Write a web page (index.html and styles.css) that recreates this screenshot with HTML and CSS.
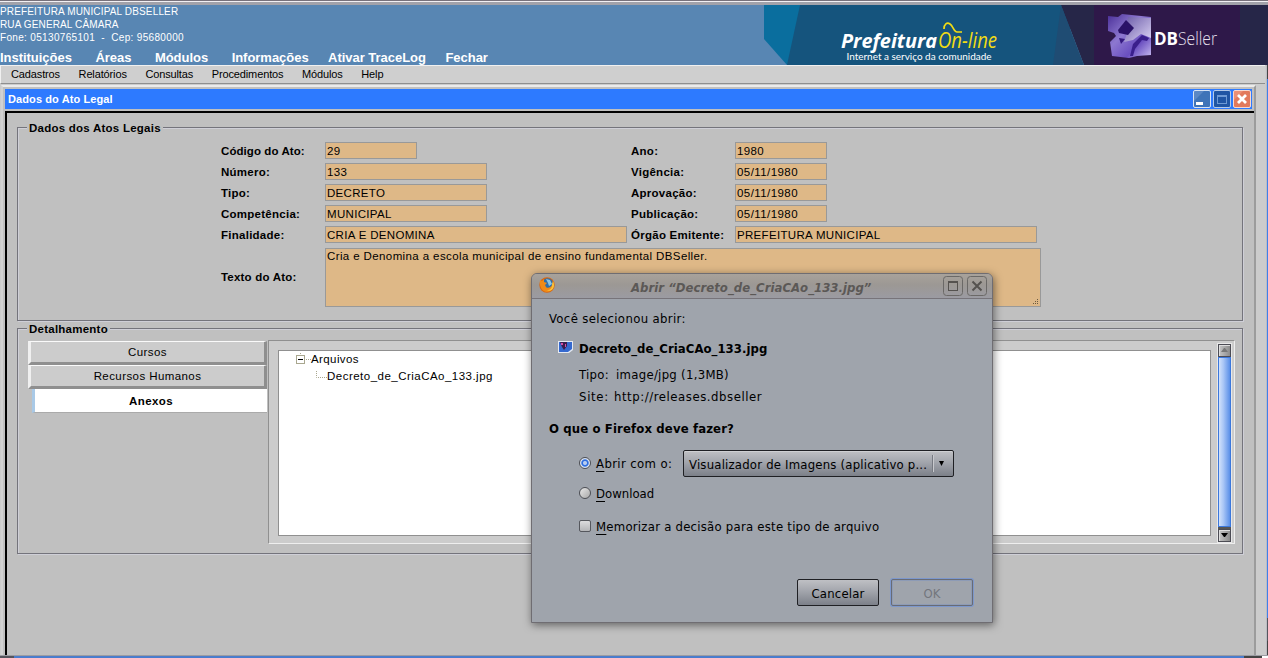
FILE: index.html
```
<!DOCTYPE html>
<html lang="pt-BR">
<head>
<meta charset="utf-8">
<title>Dados do Ato Legal</title>
<link rel="stylesheet" href="styles.css">
</head>
<body>
<div class="chrome"></div>
<header class="header">
  <div class="org">
    <div class="org-name">PREFEITURA MUNICIPAL DBSELLER</div>
    <div class="org-street">RUA GENERAL CÂMARA</div>
    <div class="org-fone">Fone: 05130765101 &nbsp;-&nbsp; Cep: 95680000</div>
    <nav class="main-nav"><a>Instituições</a><a>Áreas</a><a>Módulos</a><a>Informações</a><a class="near">Ativar TraceLog</a><a class="near">Fechar</a></nav>
  </div>
  <svg class="banner" width="504" height="60" viewBox="764 5 504 60">
    <defs>
      <linearGradient id="cube" x1="0" y1="0" x2="1" y2="1"><stop offset="0" stop-color="#4a2f98"/><stop offset=".4" stop-color="#8d78d0"/><stop offset=".7" stop-color="#6a4fc0"/><stop offset="1" stop-color="#c9bdf2"/></linearGradient>
      <linearGradient id="face" x1="0" y1="0" x2="1" y2="1"><stop offset="0" stop-color="#6a5aa8"/><stop offset="1" stop-color="#ddd5f5"/></linearGradient>
    </defs>
    <path fill="#0a6e9e" d="M764 5h40v60h-17L764 39z"/>
    <path fill="#15547d" d="M800 5h270v60H787z"/>
    <path fill="#262648" d="M1061 5h207v60h-184z"/>
    <path fill="#1f4c73" d="M1061 5l23 60h-31z"/>
    <path fill="#2e1849" d="M1094 5h146v60h-146z"/>
    <path fill="url(#cube)" d="M1108 16l10 1 4-3 29 3v38l-14 1-8 2-17-2-2-14 6-6-2-3-6-2z"/>
    <path fill="url(#face)" d="M1128 17l23 1v20l-10-4-8 6-9 2 3-9 5-6-5-5z"/>
    <path fill="#2a1268" d="M1118 30l8-10 8 8-6 7-9-2z"/>
    <path fill="#3a1f8c" d="M1130 56l3-12 9-9 7 3-2 3-5-1-7 9-2 7z"/>
    <path fill="#34197f" d="M1119 38l6 1-4 5z"/>
    <text class="pref" x="841" y="48" textLength="96" lengthAdjust="spacingAndGlyphs">Prefeitura</text>
    <text class="online" x="938" y="48" textLength="59" lengthAdjust="spacingAndGlyphs">On-line</text>
    <path fill="none" stroke="#f2dc14" stroke-width="1.700" d="M944 29c0-5 3-7 6-5s4 8 7 8h5"/>
    <text class="slogan" x="846.500" y="59.500" textLength="145" lengthAdjust="spacingAndGlyphs">Internet a serviço da comunidade</text>
    <text class="db" x="1154" y="45" textLength="24" lengthAdjust="spacingAndGlyphs">DB</text>
    <text class="seller" x="1178" y="45" textLength="39" lengthAdjust="spacingAndGlyphs">Seller</text>
  </svg>
</header>
<div class="page">
  <main class="content">
    <nav class="menubar"><a>Cadastros</a><a>Relatórios</a><a>Consultas</a><a>Procedimentos</a><a>Módulos</a><a>Help</a></nav>
    <section class="window">
      <div class="titlebar">
        <span>Dados do Ato Legal</span>
        <span class="winbtns">
          <svg width="18" height="18"><rect x=".5" y=".5" width="17" height="17" rx="1.500" fill="#3f74b8" stroke="#d8e4f4"/><path d="M1 1h10L1 11z" fill="#8fb0dc" opacity=".35"/><path fill="#fff" d="M3 12h7v3H3z"/></svg>
          <svg width="18" height="18"><rect x=".5" y=".5" width="17" height="17" rx="1.500" fill="#1f55a4" stroke="#b4cae8"/><rect x="4.500" y="5.500" width="9" height="8" fill="none" stroke="#6d9ad6"/><path fill="#6d9ad6" d="M4 5h10v2H4z"/></svg>
          <svg width="18" height="18"><rect x=".5" y=".5" width="17" height="17" rx="1.500" fill="#e2795c" stroke="#f7d9d0"/><path d="M1 1h9L1 10z" fill="#f5a58e" opacity=".5"/><path stroke="#fff" stroke-width="2.800" d="M5 5l8 8M13 5l-8 8"/></svg>
        </span>
      </div>
      <div class="winbody">
        <fieldset class="fs-dados">
          <legend>Dados dos Atos Legais</legend>
          <div class="form">
            <label class="tight">Código do Ato:</label><div class="in s">29</div><label>Ano:</label><div class="in s">1980</div>
            <label>Número:</label><div class="in m">133</div><label>Vigência:</label><div class="in s date">05/11/1980</div>
            <label>Tipo:</label><div class="in m">DECRETO</div><label>Aprovação:</label><div class="in s date">05/11/1980</div>
            <label>Competência:</label><div class="in m">MUNICIPAL</div><label>Publicação:</label><div class="in s date">05/11/1980</div>
            <label>Finalidade:</label><div class="in">CRIA E DENOMINA</div><label>Órgão Emitente:</label><div class="in">PREFEITURA MUNICIPAL</div>
            <label>Texto do Ato:</label>
            <div class="in area">Cria e Denomina a escola municipal de ensino fundamental DBSeller.<svg class="grip" width="6" height="6"><path fill="#6b5a40" d="M4 0h1v1H4zM2 2h1v1H2zM4 2h1v1H4zM0 4h1v1H0zM2 4h1v1H2zM4 4h1v1H4z"/></svg></div>
          </div>
        </fieldset>
        <fieldset class="fs-det">
          <legend>Detalhamento</legend>
          <div class="split">
            <div class="tabs"><div class="tab">Cursos</div><div class="tab">Recursos Humanos</div><div class="tab on">Anexos</div></div>
            <div class="panel">
              <div class="tree">
                <div class="node"><svg width="15" height="13"><rect x=".5" y="3.500" width="8" height="8" fill="#fff" stroke="#a9a78f"/><path stroke="#000" d="M2 7.500h5"/><path stroke="#a9a78f" stroke-dasharray="1 1" d="M10 7.500h5M4.500 1v2"/></svg><span>Arquivos</span></div>
                <div class="node leaf"><svg width="11" height="13"><path fill="none" stroke="#a9a78f" stroke-dasharray="1 1" d="M.5 1v6.500H11"/></svg><span>Decreto_de_CriaCAo_133.jpg</span></div>
              </div>
              <div class="scroll">
                <div class="sbtn"><svg width="7" height="5"><path fill="#777" d="M3 0h1l3 4H0z"/></svg></div>
                <div class="thumb"></div>
                <div class="sgap"></div>
                <div class="sbtn"><svg width="7" height="5"><path fill="#000" d="M0 0h7L4 4H3z"/></svg></div>
              </div>
            </div>
          </div>
        </fieldset>
      </div>
    </section>
  </main>
  <div class="pagescroll"><div class="pbtn"></div><div class="pthumb"></div><div class="pgap"></div><div class="pbtn"></div></div>
</div>
<div class="hscroll"><div class="hstart"></div><div class="hthumb"></div><div class="hend"></div></div>

<div class="dialog">
  <div class="dtitle">
    <svg width="16" height="16" viewBox="0 0 16 16"><circle cx="8" cy="8" r="7.700" fill="#d9660f"/><circle cx="8.600" cy="6.600" r="5.400" fill="#2f6ea8"/><path fill="#8cc5e6" d="M7 2l4 1 2 4-3 2-1-3z"/><path fill="#f08a18" d="M1 3l2 1 2-2 0 3 3 1-2 2 1 2c2 2 5 0 6-2l2-4c1 6-3 11-7 11S0 11 1 3z"/><path fill="#f9c23c" d="M13 7c1 4-3 7-6 6 4 2 8 0 8-5l-1-4z"/></svg>
    <span class="dname">Abrir “Decreto_de_CriaCAo_133.jpg”</span>
    <svg width="20" height="20"><rect x=".5" y=".5" width="19" height="19" rx="3" fill="none" stroke="#6b6967"/><rect x="5.500" y="5.500" width="9" height="9" fill="none" stroke="#55524f"/><path stroke="#55524f" stroke-width="1" d="M5 6.500h10"/></svg>
    <svg class="dx" width="20" height="20"><rect x=".5" y=".5" width="19" height="19" rx="3" fill="none" stroke="#6b6967"/><path stroke="#55524f" stroke-width="2" d="M5.500 5.500l9 9M14.500 5.500l-9 9"/></svg>
  </div>
  <div class="dbody">
    <div class="row first">Você selecionou abrir:</div>
    <div class="row file"><svg width="15" height="12"><path fill="#e4e9f2" d="M0 0h15v9l-4 3H0z"/><path fill="#3569cf" d="M1 1h13v7l-4 3H1z"/><path fill="#3a1d4d" d="M2 1h7v4L6 9 4 6z"/><path fill="#d64fa4" d="M3 2h2v2H3zM7 3h1v3H7z"/></svg><b>Decreto_de_CriaCAo_133.jpg</b></div>
    <div class="row info"><span class="k">Tipo:</span><span class="tipo">image/jpg (1,3MB)</span></div>
    <div class="row info site"><span class="k">Site:</span><span class="url">http://releases.dbseller</span></div>
    <div class="row ask"><b>O que o Firefox deve fazer?</b></div>
    <div class="row opt open"><i class="radio sel"></i><span class="olabel"><u>A</u>brir com o:</span><div class="combo"><span>Visualizador de Imagens (aplicativo p...</span><i class="arrow"><svg width="6" height="5"><path d="M0 0h5L2.500 5z"/></svg></i></div></div>
    <div class="row opt down"><i class="radio"></i><span><u>D</u>ownload</span></div>
    <div class="row opt memo"><i class="check"></i><span><u>M</u>emorizar a decisão para este tipo de arquivo</span></div>
    <div class="buttons"><div class="btn">Cancelar</div><div class="btn ok">OK</div></div>
  </div>
</div>
</body>
</html>
```
FILE: styles.css
```
* { box-sizing: border-box; }
body { margin: 0; width: 1268px; height: 658px; overflow: hidden; display: flex; flex-direction: column; background: #ccc; font: 11.5px/14px "Liberation Sans", Arial, sans-serif; color: #000; position: relative; }
svg { display: block; flex: none; }

.chrome { height: 5px; flex: none; background: #a2a2aa; border-top: 1px solid #77717b; box-shadow: inset 0 1px #f2f0f4; }
.header { height: 60px; flex: none; display: flex; justify-content: space-between; background: #5886b3; color: #fff; }
.org { font-size: 10px; line-height: 13px; }
.org-name { letter-spacing: .15px; }
.org-street { letter-spacing: .13px; }
.org-fone { letter-spacing: .33px; }
.main-nav { display: flex; gap: 23.500px; font-size: 13px; font-weight: bold; line-height: 16px; padding-top: 6px; white-space: nowrap; letter-spacing: -.03px; }
.main-nav .near { margin-left: -4px; }
.pref { font: italic bold 20px "Open Sans", sans-serif; fill: #fff; }
.online { font: italic 21px "Open Sans", sans-serif; fill: #f2dc14; }
.slogan { font: 10px Lato, sans-serif; fill: #fff; }
.db { font: bold 18px "Open Sans", sans-serif; fill: #fff; }
.seller { font: 300 18px "Open Sans", sans-serif; fill: #e6e0ee; }

.page { display: flex; height: 590px; flex: none; }
.content { width: 1266px; }
.menubar { height: 19px; width: 1265px; background: #cfcfcf; border: 1px solid #f0f0f0; border-bottom-color: #8f8f8f; border-right: 0; display: flex; gap: 18.600px; padding-left: 10px; font-size: 11px; line-height: 17px; letter-spacing: -.13px; }
.window { width: 1255px; height: 570px; margin: 1px 0 0 1px; background: #c0c0c0; border: 2px solid; border-color: #ebebeb #9c9c9c #c0c0c0 #d2d2d2; border-bottom: 0; padding: 2px 2px 0; }
.titlebar { height: 20px; background: #2d7aff; color: #fff; font-weight: bold; font-size: 11px; letter-spacing: .1px; padding: 0 1px 0 3px; display: flex; justify-content: space-between; align-items: center; }
.winbtns { display: flex; gap: 2px; }
.winbody { margin: 2px 0 0 0; width: 1249px; height: 544px; border: solid #000; border-width: 2px 0 0 2px; padding: 8px 0 0 10px; }

fieldset { margin: 0 0 1px; padding: 0 0 0 9px; width: 1226px; border: 1px solid #74747c; box-shadow: inset 1px 1px #cfcfd7, 1px 1px #cfcfd7; }
legend { padding: 0 2px; height: 13px; font-weight: bold; line-height: 14px; background: #c0c0c0; letter-spacing: .24px; }
.fs-dados { height: 200px; }
.fs-det { height: 232px; }

.form { display: grid; grid-template-columns: 104px 306px 104px 302px; grid-auto-rows: 17px; row-gap: 4px; margin: 8px 0 0 194px; width: 816px; }
.form label { font-weight: bold; line-height: 18px; white-space: nowrap; letter-spacing: .26px; }
.form label.tight { letter-spacing: .08px; }
.form label:nth-last-child(2) { line-height: 61px; letter-spacing: .2px; }
.in { height: 17px; width: 302px; background: #deb887; border: 1px solid #999; padding-left: 1px; line-height: 17px; white-space: nowrap; letter-spacing: .32px; }
.in.s { width: 92px; }
.in.m { width: 162px; }
.in.date { letter-spacing: .43px; }
.in.area { grid-column: 2 / 5; width: 716px; height: 59px; margin-top: 1px; letter-spacing: .39px; line-height: 15px; position: relative; }
.grip { position: absolute; right: 1px; bottom: 1px; }

.split { display: flex; margin: 5px 0 0 1px; }
.tabs { width: 239px; margin: 1px 1px 0 0; text-align: center; }
.tab { height: 24px; border: solid; border-width: 1px 3px 3px; border-color: #fafafa #8f8f8f #8f8f8f #f0f0f0; background: #ccc; line-height: 20px; letter-spacing: .42px; }
.tab.on { margin-left: 4px; border-width: 0 0 1px 3px; border-color: #aaa #aaa #aaa #a9c9e6; background: #fff; font-weight: bold; line-height: 24px; }
.panel { width: 967px; height: 204px; background: #ccc; border: 1px solid #909090; border-right-color: #eee; border-bottom-color: #eee; display: flex; justify-content: space-between; padding: 2px 2px 2px 9px; }
.tree { width: 933px; height: 186px; margin-top: 7px; background: #fff; border: 1px solid #909090; padding: 0 0 0 17px; }
.node { display: flex; align-items: flex-start; line-height: 16px; height: 17px; letter-spacing: .4px; }
.node svg { margin-top: 1px; }
.leaf { padding-left: 20px; letter-spacing: .48px; }
.leaf span { line-height: 17px; }
.node.leaf svg { margin-top: 2px; }
.scroll { width: 15px; height: 200px; border: 1px solid #e8e8e8; display: flex; flex-direction: column; background: #999; }
.sbtn { height: 13px; flex: none; border: 1px solid #4c4c54; background: linear-gradient(90deg, #c6c6c6, #8c8c8c); box-shadow: inset 1px 1px #ddd; display: flex; align-items: center; justify-content: center; }
.thumb { flex: 1; border: 1px solid #3c78dc; background: linear-gradient(90deg, #d2e2fb, #a9c6f6 40%, #5a8fe8); }
.sgap { height: 2px; background: #555; }

.pagescroll { width: 2px; display: flex; flex-direction: column; background: #fff; border-left: 1px solid #bcbcc2; }
.pbtn { height: 14px; background: #fff; border: 1px solid #444; border-right: 0; }
.pthumb { height: 539px; background: #3f80ea; }
.pgap { height: 23px; background: #55555d; }
.hscroll { height: 3px; flex: none; display: flex; border-top: 1px solid #9c9ca2; }
.hstart { width: 14px; background: #55555d; }
.hthumb { width: 1230px; background: #4a7ccc; }
.hend { flex: 1; background: linear-gradient(90deg, #444 0 18px, #fff 18px); }

.dialog { position: absolute; left: 531px; top: 273px; width: 462px; height: 350px; border: 1px solid #6f6d72; border-radius: 6px 6px 0 0; background: #9fa4ac; box-shadow: 1px 2px 9px rgba(0,0,0,.5); font: 13px/20px "Comic Sans MS", "DejaVu Sans Condensed", "DejaVu Sans", sans-serif; font-stretch: condensed; }
.dtitle { height: 25px; border-bottom: 1px solid #77747a; border-radius: 5px 5px 0 0; background: linear-gradient(#a8a29b, #9c9894 45%, #9b9ba2); display: flex; padding: 2px 5px 0 7px; gap: 4px; }
.dtitle svg:first-child { margin-top: 1px; }
.dname { flex: 1; padding-left: 72px; font-weight: bold; font-style: italic; color: #5b5856; line-height: 23px; letter-spacing: .03px; white-space: nowrap; }
.dbody { padding: 10px 19px 0 17px; white-space: nowrap; }
.row { height: 20px; display: flex; align-items: center; }
.first { letter-spacing: .36px; }
.file { margin-top: 10px; padding-left: 9px; gap: 6px; letter-spacing: .04px; }
.file svg { margin-bottom: 4px; }
.info { margin-top: 6px; padding-left: 30px; }
.site { margin-top: 2px; }
.k { width: 37px; letter-spacing: .3px; }
.site .k { width: 35px; letter-spacing: .7px; }
.tipo { letter-spacing: .29px; }
.url { letter-spacing: .55px; }
.ask { margin-top: 12px; letter-spacing: .13px; }
.opt { padding-left: 30px; gap: 5px; }
.open { height: 27px; margin-top: 11px; }
.olabel { width: 82px; letter-spacing: .37px; }
.down { margin-top: 7px; }
.memo { margin-top: 13px; letter-spacing: .24px; }
u { text-underline-offset: 3px; }
.radio { width: 12px; height: 12px; border-radius: 50%; border: 1px solid #4c4e54; background: linear-gradient(135deg, #e8e8e8, #a8a8a8); margin-bottom: 2px; flex: none; }
.radio.sel { background: radial-gradient(circle, #b9cdf0 0 1.500px, #2f6fe0 2.500px 3.200px, #dbe4f2 4.200px); }
.check { width: 12px; height: 12px; border-radius: 2px; border: 1px solid #55575d; background: linear-gradient(#dcdcde, #b4b5b8); margin-bottom: 2px; flex: none; }
.combo { width: 271px; height: 27px; border: 1px solid #1f2024; border-radius: 2px; background: linear-gradient(#bfc0c4, #a2a5ac 45%, #7c8089); box-shadow: inset 0 1px #cfd0d3; display: flex; padding-left: 5px; line-height: 27px; letter-spacing: .2px; flex: none; }
.combo span { width: 245px; }
.arrow { width: 20px; height: 17px; margin-top: 4px; border-left: 1px solid #c8c9cd; padding: 6px 0 0 5px; box-shadow: -1px 0 #777a82; }
.buttons { display: flex; justify-content: flex-end; gap: 12px; margin-top: 42px; }
.btn { width: 82px; height: 27px; border: 1px solid #1f2024; border-radius: 2px; background: linear-gradient(#bfc0c4, #a2a5ac 45%, #7c8089); text-align: center; line-height: 27px; letter-spacing: .17px; }
.btn.ok { background: #9fa4ac; border: 1px solid #686b75; box-shadow: 0 0 0 1px #7c97cc, inset 0 0 0 1px #8d9bb6; color: #73767d; }
```
